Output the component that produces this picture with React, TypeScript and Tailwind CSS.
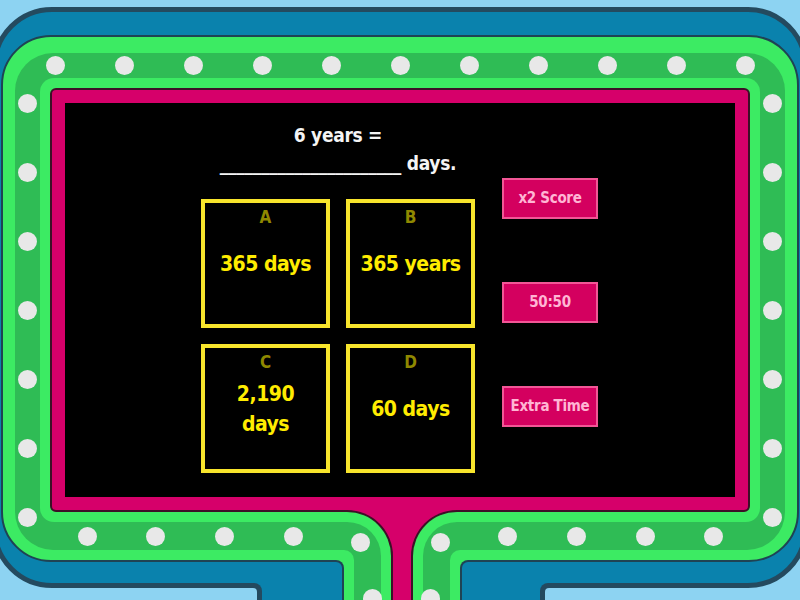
import React from 'react';

const font = "font-['Liberation_Sans_Narrow','DejaVu_Sans_Condensed',sans-serif]";

const dots: [number, number][] = [
  ...[55, 124, 193, 262, 331, 400, 469, 538, 607, 676, 745].map((x) => [x, 65] as [number, number]),
  ...[103, 172, 241, 310, 379, 448, 517].map((y) => [27, y] as [number, number]),
  ...[103, 172, 241, 310, 379, 448, 517].map((y) => [772, y] as [number, number]),
  ...[87, 155, 224, 293, 507, 576, 645, 713].map((x) => [x, 536] as [number, number]),
  [360, 542],
  [440, 542],
  [372, 598],
  [430, 598],
];

function Answer({ letter, children }: { letter: string; children: React.ReactNode }) {
  return (
    <div className="flex h-[129px] w-[129px] flex-col items-center border-4 border-[#f8e52c] pt-[3px] pb-[25px]">
      <div className="text-[17px] font-bold leading-[22px] text-[#8f8800]">{letter}</div>
      <div className="flex flex-1 items-center justify-center text-center text-[21px] font-bold leading-[30px] tracking-[-0.5px] text-[#ffec00]">
        {children}
      </div>
    </div>
  );
}

function PowerUp({ label }: { label: string }) {
  return (
    <div className="flex h-[41px] w-[96px] items-center justify-center border-2 border-[#f25696] bg-[#d4005f] text-[15px] font-bold tracking-[-0.3px] text-[#ffb5d4]">
      {label}
    </div>
  );
}

// left leg of the stand, layers from the stem outwards
function LegLeft() {
  return (
    <div className="flex w-[143px] flex-col rounded-tr-[46px] bg-[#3d1027] pt-[2px] pr-[2px]">
      <div className="flex flex-1 flex-col rounded-tr-[44px] bg-[#3ceb63] pt-[10px] pr-[10px]">
        <div className="flex flex-1 flex-col rounded-tr-[34px] bg-[#2fbc55] pt-[28px] pr-[27px]">
          <div className="flex flex-1 flex-col rounded-tr-[10px] bg-[#3ceb63] pt-[10px] pr-[10px]">
            <div className="flex flex-1 flex-col rounded-tr-[8px] bg-[#1f4354] pt-[2px] pr-[2px]">
              <div className="flex flex-1 flex-col rounded-tr-[6px] bg-[#0a82ad] pt-[21px] pr-[80px]">
                <div className="flex flex-1 flex-col rounded-tr-[8px] bg-[#244a5f] pt-[5px] pr-[5px]">
                  <div className="flex-1 rounded-tr-[4px] bg-[#8dd3f2]" />
                </div>
              </div>
            </div>
          </div>
        </div>
      </div>
    </div>
  );
}

function LegRight() {
  return (
    <div className="flex w-[139px] flex-col rounded-tl-[46px] bg-[#3d1027] pt-[2px] pl-[2px]">
      <div className="flex flex-1 flex-col rounded-tl-[44px] bg-[#3ceb63] pt-[10px] pl-[10px]">
        <div className="flex flex-1 flex-col rounded-tl-[34px] bg-[#2fbc55] pt-[28px] pl-[27px]">
          <div className="flex flex-1 flex-col rounded-tl-[10px] bg-[#3ceb63] pt-[10px] pl-[10px]">
            <div className="flex flex-1 flex-col rounded-tl-[8px] bg-[#1f4354] pt-[2px] pl-[2px]">
              <div className="flex flex-1 flex-col rounded-tl-[6px] bg-[#0a82ad] pt-[21px] pl-[78px]">
                <div className="flex flex-1 flex-col rounded-tl-[8px] bg-[#244a5f] pt-[5px] pl-[5px]">
                  <div className="flex-1 rounded-tl-[4px] bg-[#8dd3f2]" />
                </div>
              </div>
            </div>
          </div>
        </div>
      </div>
    </div>
  );
}

export default function App() {
  return (
    <div className={`relative h-[600px] w-[800px] overflow-hidden bg-[#8dd3f2] ${font}`}>
      {/* blue board */}
      <div className="mt-[7px] ml-[-8px] flex h-[581px] w-[816px] flex-col rounded-[60px] border-[5px] border-[#244a5f] bg-[#0a82ad] pt-[23px] pr-[4px] pb-[21px] pl-[4px]">
        {/* green ring */}
        <div className="flex flex-1 flex-col rounded-[50px] border-2 border-[#1f4354] bg-[#3ceb63] px-[12px] pt-[16px] pb-[10px]">
          <div className="flex flex-1 flex-col rounded-[38px] bg-[#2fbc55] px-[25px] pt-[25px] pb-[28px]">
            <div className="flex flex-1 flex-col rounded-[14px] bg-[#3ceb63] p-[10px]">
              <div className="flex flex-1 flex-col rounded-[6px] border-2 border-[#3d1027] bg-[#d6006a] p-[13px]">
                {/* screen */}
                <div className="flex flex-1 items-start bg-black">
                  <div className="ml-[136px] flex w-[274px] flex-col items-center pt-[18px]">
                    <div className="text-center text-[19px] font-bold leading-[28px] tracking-[-0.3px] text-[#f4f4f4]">
                      <div>6 years =</div>
                      <div>______________________ days.</div>
                    </div>
                    <div className="mt-[22px] grid grid-cols-2 gap-[16px]">
                      <Answer letter="A">365 days</Answer>
                      <Answer letter="B">365 years</Answer>
                      <Answer letter="C">
                        2,190
                        <br />
                        days
                      </Answer>
                      <Answer letter="D">60 days</Answer>
                    </div>
                  </div>
                  <div className="ml-[27px] flex flex-col gap-[63px] pt-[75px]">
                    <PowerUp label="x2 Score" />
                    <PowerUp label="50:50" />
                    <PowerUp label="Extra Time" />
                  </div>
                </div>
              </div>
            </div>
          </div>
        </div>
      </div>

      {/* stand below the board */}
      <div className="absolute top-[510px] left-[250px] flex h-[90px] w-[300px] bg-[#d6006a]">
        <LegLeft />
        <div className="flex-1" />
        <LegRight />
      </div>

      {/* bulbs */}
      {dots.map(([x, y], i) => (
        <div
          key={i}
          className="absolute h-[19px] w-[19px] rounded-full bg-[#e8e8e8]"
          style={{ left: x - 9.5, top: y - 9.5 }}
        />
      ))}
    </div>
  );
}
